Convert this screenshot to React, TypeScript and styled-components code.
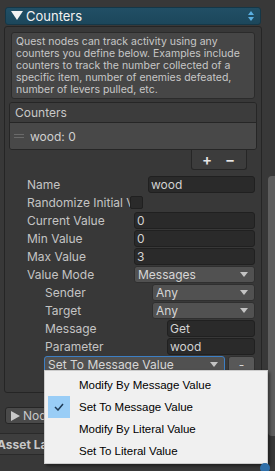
import React from "react";
import styled, { createGlobalStyle } from "styled-components";

const Global = createGlobalStyle`
  html, body { margin: 0; padding: 0; background: #383838; overflow: hidden; }
  body { font-family: Inter, "Noto Sans", sans-serif; }
`;

const Page = styled.div`
  width: 275px;
  height: 471px;
  display: flex;
  position: relative;
  overflow: hidden;
  background: #383838;
`;

const Main = styled.div`
  width: 267px;
  display: flex;
  flex-direction: column;
`;

const Track = styled.div`
  width: 8px;
  display: flex;
  flex-direction: column;
  background: #383838;
`;

const Thumb = styled.div`
  margin-top: 176px;
  height: 260px;
  width: 7px;
  margin-left: 1px;
  background: #5e5e5e;
  border-radius: 4px 0 0 4px;
`;

const HeaderBar = styled.div`
  margin: 7px 0 0 5px;
  width: 256px;
  height: 18px;
  box-sizing: border-box;
  border: 1px solid #153747;
  border-radius: 3px;
  background: linear-gradient(#214f65, #1c475b);
  display: flex;
  align-items: center;
  padding: 0 6px 0 5px;
  color: #f2f2f2;
  font-size: 13px;
  gap: 3px;
`;

const HeaderTitle = styled.span`
  flex: 1;
  line-height: 16px;
`;

const OuterBox = styled.div`
  margin: 1px 0 0 4px;
  width: 258px;
  height: 367px;
  box-sizing: border-box;
  border: 1px solid #252525;
  border-radius: 3px;
  display: flex;
  flex-direction: column;
`;

const HelpBox = styled.div`
  margin: 5px 6px 0 6px;
  padding: 3px 4px 2px 4px;
  background: #464646;
  border: 1px solid #2b2b2b;
  border-radius: 3px;
  color: #c8c8c8;
  font-size: 10.5px;
  line-height: 12px;
`;

const ListBox = styled.div`
  margin: 3px 4px 0 4px;
  border: 1px solid #262626;
  border-radius: 3px;
  display: flex;
  flex-direction: column;
  overflow: hidden;
`;

const ListHeader = styled.div`
  height: 19px;
  background: #3c3c3c;
  border-bottom: 1px solid #262626;
  display: flex;
  align-items: center;
  padding-left: 5px;
  color: #c8c8c8;
  font-size: 12px;
`;

const ListItem = styled.div`
  height: 26px;
  background: #484848;
  display: flex;
  align-items: center;
  padding-left: 4px;
  gap: 6px;
  color: #d0d0d0;
  font-size: 12px;
`;

const Handle = styled.div`
  width: 10px;
  height: 4px;
  border-top: 1px solid #6a6a6a;
  border-bottom: 1px solid #6a6a6a;
  box-sizing: border-box;
`;

const Footer = styled.div`
  align-self: flex-end;
  margin-right: 14px;
  width: 56px;
  height: 20px;
  box-sizing: border-box;
  background: #3c3c3c;
  border: 1px solid #262626;
  border-top: none;
  border-radius: 0 0 3px 3px;
  display: flex;
  align-items: center;
  justify-content: space-between;
  padding: 0 11px 0 10px;
  color: #e6e6e6;
  font-size: 15px;
  font-weight: 600;
`;

const Fields = styled.div`
  margin-top: 5px;
  display: flex;
  flex-direction: column;
`;

const Row = styled.div<{ $indent: number }>`
  height: 18px;
  display: flex;
  align-items: center;
  padding-left: ${(p) => p.$indent - 5}px;
  padding-right: 6px;
`;

const Label = styled.div<{ $width: number }>`
  width: ${(p) => p.$width}px;
  flex: none;
  overflow: hidden;
  white-space: nowrap;
  color: #c4c4c4;
  font-size: 12px;
`;

const Input = styled.div`
  flex: 1;
  height: 17px;
  box-sizing: border-box;
  background: #2a2a2a;
  border: 1px solid #202020;
  border-radius: 3px;
  color: #d2d2d2;
  font-size: 12px;
  line-height: 15px;
  padding-left: 2px;
`;

const Checkbox = styled.div`
  width: 13px;
  height: 13px;
  box-sizing: border-box;
  background: #2a2a2a;
  border: 1px solid #202020;
  border-radius: 2px;
`;

const Dropdown = styled.div<{ $focus?: boolean }>`
  flex: 1;
  height: 17px;
  box-sizing: border-box;
  background: #515151;
  border: 1px solid ${(p) => (p.$focus ? "#3d7fc4" : "#2f2f2f")};
  border-radius: 3px;
  color: #d6d6d6;
  font-size: 12px;
  display: flex;
  align-items: center;
  padding: 0 6px 0 3px;
`;

const DropText = styled.span`
  flex: 1;
  white-space: nowrap;
  overflow: hidden;
`;

const SmallButton = styled.div`
  width: 27px;
  height: 17px;
  margin-left: 3px;
  box-sizing: border-box;
  background: #585858;
  border: 1px solid #2f2f2f;
  border-radius: 3px;
  color: #d6d6d6;
  font-size: 12px;
  display: flex;
  align-items: center;
  justify-content: center;
`;

const Foldout = styled.div`
  margin: 14px 0 0 5px;
  width: 110px;
  height: 17px;
  box-sizing: border-box;
  background: #4a4a4a;
  border: 1px solid #262626;
  border-radius: 3px;
  color: #c8c8c8;
  font-size: 12px;
  display: flex;
  align-items: center;
  padding-left: 5px;
  gap: 3px;
`;

const AssetRow = styled.div`
  margin-top: 9px;
  height: 20px;
  border-top: 1px solid #2a2a2a;
  border-bottom: 1px solid #2a2a2a;
  background: #3e3e3e;
  color: #c8c8c8;
  font-size: 12px;
  font-weight: 700;
  display: flex;
  align-items: center;
  text-indent: -3px;
  white-space: nowrap;
`;

const Menu = styled.div`
  position: absolute;
  left: 44px;
  top: 370px;
  width: 224px;
  height: 94px;
  box-sizing: border-box;
  background: #f0f0f0;
  border: 1px solid #cccccc;
  box-shadow: 2px 2px 3px rgba(0, 0, 0, 0.45);
  padding: 3px 2px;
  display: flex;
  flex-direction: column;
  font-family: "Liberation Sans", Arial, sans-serif;
`;

const MenuItem = styled.div`
  height: 22px;
  display: flex;
  align-items: center;
  color: #000000;
  font-size: 11.5px;
`;

const CheckCell = styled.div<{ $on?: boolean }>`
  width: 22px;
  height: 22px;
  margin-left: 1px;
  margin-right: 9px;
  background: ${(p) => (p.$on ? "#99cdf6" : "transparent")};
  display: flex;
  align-items: center;
  justify-content: center;
`;

const Corner = styled.div`
  position: absolute;
  left: 260px;
  top: 463px;
  width: 10px;
  height: 10px;
  border-radius: 5px;
  background: #2f6fa8;
`;

const Arrow = () => (
  <svg width="8" height="5" viewBox="0 0 8 5">
    <polygon points="0,0 8,0 4,5" fill="#c4c4c4" />
  </svg>
);

type FieldRow = {
  label: string;
  indent: number;
  start: number;
  kind: "input" | "check" | "drop";
  value?: string;
};

const rows: FieldRow[] = [
  { label: "Name", indent: 27, start: 148, kind: "input", value: "wood" },
  { label: "Randomize Initial Value", indent: 27, start: 133, kind: "check" },
  { label: "Current Value", indent: 27, start: 134, kind: "input", value: "0" },
  { label: "Min Value", indent: 27, start: 134, kind: "input", value: "0" },
  { label: "Max Value", indent: 27, start: 134, kind: "input", value: "3" },
  { label: "Value Mode", indent: 27, start: 134, kind: "drop", value: "Messages" },
  { label: "Sender", indent: 45, start: 152, kind: "drop", value: "Any" },
  { label: "Target", indent: 45, start: 152, kind: "drop", value: "Any" },
  { label: "Message", indent: 45, start: 167, kind: "input", value: "Get" },
  { label: "Parameter", indent: 45, start: 167, kind: "input", value: "wood" },
];

const menuItems = [
  "Modify By Message Value",
  "Set To Message Value",
  "Modify By Literal Value",
  "Set To Literal Value",
];

export default function App() {
  return (
    <>
      <Global />
      <Page>
        <Main>
          <HeaderBar>
            <svg width="12" height="10" viewBox="0 0 12 10">
              <polygon points="0,0 12,0 6,9" fill="#f2f2f2" />
            </svg>
            <HeaderTitle>Counters</HeaderTitle>
            <svg width="6" height="10" viewBox="0 0 6 10">
              <polygon points="0,4 6,4 3,0" fill="#5aaee0" />
              <polygon points="0,6 6,6 3,10" fill="#5aaee0" />
            </svg>
          </HeaderBar>
          <OuterBox>
            <HelpBox>
              Quest nodes can track activity using any counters you define
              below. Examples include counters to track the number collected of
              a specific item, number of enemies defeated, number of levers
              pulled, etc.
            </HelpBox>
            <ListBox>
              <ListHeader>Counters</ListHeader>
              <ListItem>
                <Handle />
                <span>wood: 0</span>
              </ListItem>
            </ListBox>
            <Footer>
              <span>+</span>
              <span>−</span>
            </Footer>
            <Fields>
              {rows.map((r) => (
                <Row key={r.label} $indent={r.indent}>
                  <Label $width={r.start - r.indent - (r.kind === "check" ? 3 : 0)}>
                    {r.label}
                  </Label>
                  {r.kind === "check" && <Checkbox />}
                  {r.kind === "input" && <Input>{r.value}</Input>}
                  {r.kind === "drop" && (
                    <Dropdown>
                      <DropText>{r.value}</DropText>
                      <Arrow />
                    </Dropdown>
                  )}
                </Row>
              ))}
              <Row $indent={44}>
                <Dropdown $focus>
                  <DropText>Set To Message Value</DropText>
                  <Arrow />
                </Dropdown>
                <SmallButton>-</SmallButton>
              </Row>
            </Fields>
          </OuterBox>
          <Foldout>
            <svg width="9" height="10" viewBox="0 0 9 10">
              <polygon points="0,0 9,5 0,10" fill="#c8c8c8" />
            </svg>
            <span>Node Settings</span>
          </Foldout>
          <AssetRow>Asset Label</AssetRow>
        </Main>
        <Track>
          <Thumb />
        </Track>
        <Menu>
          {menuItems.map((m) => (
            <MenuItem key={m}>
              <CheckCell $on={m === "Set To Message Value"}>
                {m === "Set To Message Value" && (
                  <svg width="10" height="8" viewBox="0 0 10 8">
                    <polyline
                      points="1,4 4,7 9,1"
                      fill="none"
                      stroke="#1e3a55"
                      strokeWidth="1.5"
                    />
                  </svg>
                )}
              </CheckCell>
              <span>{m}</span>
            </MenuItem>
          ))}
        </Menu>
        <Corner />
      </Page>
    </>
  );
}
